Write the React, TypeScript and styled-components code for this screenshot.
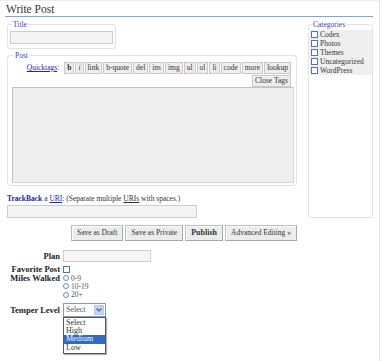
import styled, { createGlobalStyle } from "styled-components";

const GlobalStyle = createGlobalStyle`
  html, body {
    margin: 0;
    padding: 0;
    background: #fff;
  }
  body {
    font-family: "Liberation Serif", "Times New Roman", serif;
    color: #333;
  }
`

const Wrap = styled.div`
  position: relative;
  width: 380px;
  height: 361px;
  box-sizing: border-box;
  padding: 2px 6px 0 5px;
  border-top: 1px solid #eee;
  border-right: 1px solid #e6e6e6;
`

const Heading = styled.h2`
  margin: 0;
  padding: 0 0 0 1px;
  font: normal 11.5px/13px "Liberation Serif", serif;
  color: #333;
  border-bottom: 1px solid #7ea7d8;
`

const Main = styled.div`
  display: flex;
  align-items: flex-start;
  gap: 11px;
`

const LeftColumn = styled.div`
  width: 290px;
  margin-left: 2px;
  display: flex;
  flex-direction: column;
`

const Fieldset = styled.fieldset<{ $top: number; $width?: number }>`
  margin: ${(p) => p.$top}px 0 0;
  padding: 2px 2px 4px;
  width: ${(p) => (p.$width ? `${p.$width}px` : "auto")};
  box-sizing: border-box;
  border: 1px solid #e2e2e2;
  border-radius: 3px;
  min-width: 0;
`

const Legend = styled.legend`
  padding: 0 1px;
  margin-left: 2px;
  font-size: 7.5px;
  line-height: 9px;
  color: #3b3bc4;
`

const TextInput = styled.input<{ $width: number; $height?: number }>`
  display: block;
  width: ${(p) => p.$width}px;
  height: ${(p) => p.$height ?? 13}px;
  margin: 0;
  padding: 0 2px;
  box-sizing: border-box;
  background: #f4f4f4;
  border: 1px solid #cdcdcd;
  font: 7.5px "Liberation Serif", serif;
  outline: 0;
`

const PostFieldset = styled(Fieldset)`
  padding: 1px 2px 2px 4px;
`

const Toolbar = styled.div`
  display: flex;
  justify-content: flex-end;
  align-items: center;
  gap: 1px;
  padding-right: 3px;
  font-size: 7.5px;
  height: 13px;
`

const QuicktagsLabel = styled.span`
  margin-right: 4px;
  color: #333;

  a {
    color: #2424a8;
    text-decoration: underline;
  }
`

const TagButton = styled.button<{ $bold?: boolean; $italic?: boolean }>`
  height: 12px;
  margin: 0;
  padding: 0 2px;
  background: #eee;
  border: 1px solid #c9c9c9;
  font: ${(p) => (p.$italic ? "italic" : "normal")} ${(p) => (p.$bold ? "bold" : "normal")} 7.5px/10px "Liberation Serif", serif;
  color: #333;
`

const PostArea = styled.textarea`
  display: block;
  width: 282px;
  height: 96px;
  margin: 0;
  box-sizing: border-box;
  background: #efefef;
  border: 1px solid #d4d4d4;
  border-top-color: #c2c2c2;
  border-left-color: #c2c2c2;
  resize: none;
  outline: 0;
`

const TrackbackLine = styled.p`
  margin: 8px 0 2px;
  font-size: 7.5px;
  line-height: 9px;
  color: #333;

  a {
    color: #2424a8;
  }
  b {
    color: #22229a;
  }
  abbr {
    text-decoration: underline;
  }
`

const ActionRow = styled.div`
  display: flex;
  justify-content: flex-end;
  gap: 2px;
  margin-top: 7px;
`

const ActionButton = styled.button<{ $bold?: boolean }>`
  height: 16px;
  margin: 0;
  padding: 0 5px;
  background: #ececec;
  border: 1px solid #bdbdbd;
  border-right-color: #a8a8a8;
  border-bottom-color: #a8a8a8;
  box-shadow: inset 1px 1px 0 #fff;
  font: ${(p) => (p.$bold ? "bold 8px" : "normal 7.5px")}/14px "Liberation Serif", serif;
  color: #333;
`

const Sidebar = styled(Fieldset)`
  height: 198px;
  padding: 1px 1px 2px;
`

const CategoryList = styled.ul`
  margin: 0;
  padding: 0;
  list-style: none;
  background: #efefef;
  width: 62px;
`

const CategoryItem = styled.li`
  display: flex;
  align-items: center;
  gap: 1px;
  height: 9px;
  padding-left: 1px;
  font-size: 7.5px;
  color: #333;
`

const Checkbox = styled.input`
  appearance: none;
  width: 7px;
  height: 7px;
  margin: 0 1px 0 0;
  box-sizing: border-box;
  background: #fff;
  border: 1px solid #56769f;
`

const Form = styled.div`
  display: flex;
  flex-direction: column;
  margin-top: 9px;
`

const FieldRow = styled.div<{ $top?: number; $align?: string }>`
  display: grid;
  grid-template-columns: 55px auto;
  column-gap: 3px;
  align-items: ${(p) => p.$align ?? "center"};
  margin-top: ${(p) => p.$top ?? 0}px;
`

const FieldLabel = styled.label`
  text-align: right;
  font: bold 8.5px/8px "Liberation Serif", serif;
  color: #222;
  white-space: nowrap;
`

const RadioList = styled.div`
  display: flex;
  flex-direction: column;
`

const RadioLine = styled.label`
  display: flex;
  align-items: center;
  height: 8.3px;
  font-size: 7.5px;
  color: #555;
`

const Radio = styled.input`
  appearance: none;
  width: 6px;
  height: 6px;
  margin: 0 2px 0 0;
  box-sizing: border-box;
  border: 1px solid #6f8cb6;
  border-radius: 50%;
  background: #fff;
`

const SelectBox = styled.div`
  position: relative;
  width: 43px;
  height: 14px;
  box-sizing: border-box;
  border: 1px solid #7f9db9;
  background: #fff;
  display: flex;
  align-items: center;
  padding-left: 2px;
  font-size: 8px;
  color: #555;
`

const SelectArrow = styled.span`
  position: absolute;
  right: 1px;
  top: 1px;
  width: 10px;
  height: 10px;
  background: #c3d3fd;
  border: 1px solid #b6c8f3;
  box-sizing: border-box;
  display: flex;
  align-items: center;
  justify-content: center;
`

const OptionList = styled.ul`
  position: absolute;
  top: 13px;
  left: -1px;
  width: 43px;
  margin: 0;
  padding: 1px 0;
  list-style: none;
  background: #fff;
  border: 1px solid #555;
  box-sizing: border-box;
  box-shadow: 1px 1px 1px rgba(0, 0, 0, 0.3);
`

const Option = styled.li<{ $active?: boolean }>`
  height: 8.3px;
  padding-left: 2px;
  font-size: 8px;
  line-height: 8.3px;
  color: ${(p) => (p.$active ? "#fff" : "#333")};
  background: ${(p) => (p.$active ? "#316ac5" : "transparent")};
`

const quicktags = ["b", "i", "link", "b-quote", "del", "ins", "img", "ul", "ol", "li", "code", "more", "lookup"];
const categories = ["Codex", "Photos", "Themes", "Uncategorized", "WordPress"];

export default function App() {
  return (
    <Wrap>
      <GlobalStyle />
      <Heading>Write Post</Heading>
      <Main>
        <LeftColumn>
          <Fieldset $top={3} $width={109}>
            <Legend>Title</Legend>
            <TextInput $width={103} />
          </Fieldset>
          <PostFieldset $top={2}>
            <Legend>Post</Legend>
            <Toolbar>
              <QuicktagsLabel>
                <a>Quicktags</a>:
              </QuicktagsLabel>
              {quicktags.map((t) => (
                <TagButton key={t} $bold={t === "b"} $italic={t === "i"}>
                  {t}
                </TagButton>
              ))}
            </Toolbar>
            <Toolbar>
              <TagButton>Close Tags</TagButton>
            </Toolbar>
            <PostArea />
          </PostFieldset>
          <TrackbackLine>
            <a>
              <b>TrackBack</b>
            </a>{" "}
            <a>
              a <u>URI</u>
            </a>
            : (Separate multiple <abbr>URIs</abbr> with spaces.)
          </TrackbackLine>
          <TextInput $width={190} />
          <ActionRow>
            <ActionButton>Save as Draft</ActionButton>
            <ActionButton>Save as Private</ActionButton>
            <ActionButton $bold>Publish</ActionButton>
            <ActionButton>Advanced Editing »</ActionButton>
          </ActionRow>
        </LeftColumn>
        <Sidebar $top={3} $width={66}>
          <Legend>Categories</Legend>
          <CategoryList>
            {categories.map((c) => (
              <CategoryItem key={c}>
                <Checkbox type="checkbox" />
                {c}
              </CategoryItem>
            ))}
          </CategoryList>
        </Sidebar>
      </Main>
      <Form>
        <FieldRow>
          <FieldLabel>Plan</FieldLabel>
          <TextInput $width={88} $height={12} />
        </FieldRow>
        <FieldRow $top={3}>
          <FieldLabel>Favorite Post</FieldLabel>
          <Checkbox type="checkbox" />
        </FieldRow>
        <FieldRow $top={1} $align="start">
          <FieldLabel>Miles Walked</FieldLabel>
          <RadioList>
            {["0-9", "10-19", "20+"].map((r) => (
              <RadioLine key={r}>
                <Radio type="radio" name="miles" />
                {r}
              </RadioLine>
            ))}
          </RadioList>
        </FieldRow>
        <FieldRow $top={4}>
          <FieldLabel>Temper Level</FieldLabel>
          <SelectBox>
            Select
            <SelectArrow>
              <svg width="6" height="4" viewBox="0 0 6 4">
                <path d="M0.5 0.5 L3 3 L5.5 0.5" fill="none" stroke="#4d6185" strokeWidth="1.2" />
              </svg>
            </SelectArrow>
            <OptionList>
              <Option>Select</Option>
              <Option>High</Option>
              <Option $active>Medium</Option>
              <Option>Low</Option>
            </OptionList>
          </SelectBox>
        </FieldRow>
      </Form>
    </Wrap>
  );
}
